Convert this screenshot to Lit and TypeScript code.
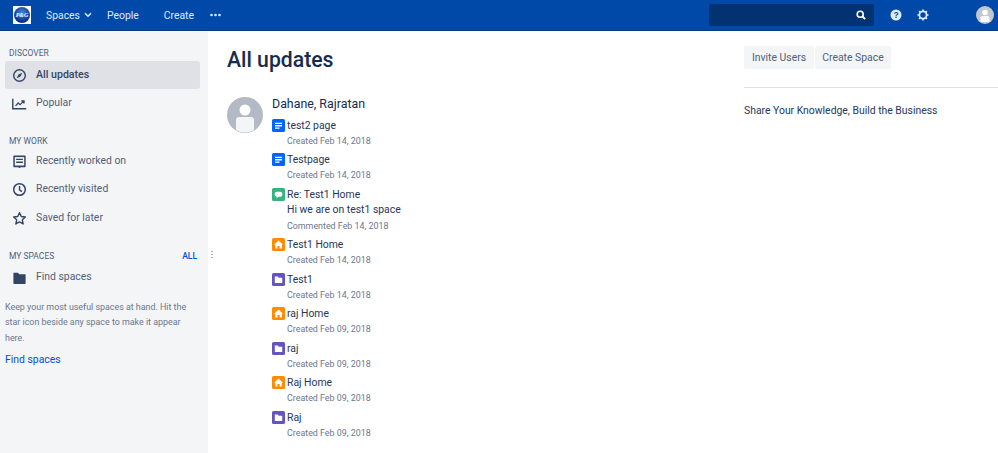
import { LitElement, html, css, svg } from "lit";
import { customElement } from "lit/decorators.js";

const typeIcon = (t: string) => {
  const colors: Record<string, string> = { page: "#0065ff", comment: "#36b37e", home: "#ff8b00", space: "#6554c0" };
  const inner: Record<string, any> = {
    page: svg`<path d="M3 3.800h7v1.300H3zM3 6.100h7v1.300H3zM3 8.400h4.500v1.300H3z" fill="#fff"/>`,
    comment: svg`<path d="M4.800 3.800h3.400a2.200 2.200 0 0 1 2.200 2.200v.6a2.200 2.200 0 0 1-2.200 2.200H6.500L4.800 10.200V8.700a2.200 2.200 0 0 1-2.200-2.100V6a2.200 2.200 0 0 1 2.200-2.200z" fill="#fff"/>`,
    home: svg`<path d="M6.500 2.600 11 6.800h-1.200V10.600H7.600V8H5.400v2.600H3.200V6.800H2z" fill="#fff"/>`,
    space: svg`<path d="M2.800 3.600h3l1 1.200h3.400v5.200H2.800z" fill="#fff"/>`,
  };
  return html`<svg class="ticon" viewBox="0 0 13 13"><rect width="13" height="13" rx="1.600" fill=${colors[t]}/>${inner[t]}</svg>`;
};

const navIcons: Record<string, any> = {
  compass: svg`<circle cx="8" cy="8" r="6.200" fill="none" stroke="#344563" stroke-width="1.500"/><path d="M11 5 9.100 9.100 5 11l1.900-4.100z" fill="#344563"/>`,
  chart: svg`<path d="M.8 3v10.600h14.400" fill="none" stroke="#344563" stroke-width="1.500"/><path d="M3.800 10.500 6.600 7.500l2 1.800 3.600-3.600M10 5.300h2.800v2.600" fill="none" stroke="#344563" stroke-width="1.400"/>`,
  doc: svg`<path d="M2.400 1.500h11.200a1 1 0 0 1 1 1v10.600a1 1 0 0 1-1 1H9.600L8 15l-1.600-.9h-4a1 1 0 0 1-1-1V2.500a1 1 0 0 1 1-1z" fill="#344563"/><rect x="3" y="3.300" width="10" height="9" fill="#f4f5f7"/><path d="M4.400 5h7.200v1.500H4.400zM4.400 8h7.200v1.500H4.400z" fill="#344563"/>`,
  clock: svg`<circle cx="8" cy="8" r="6.200" fill="none" stroke="#344563" stroke-width="1.600"/><path d="M8 4.200V8.300l2.600 2" fill="none" stroke="#344563" stroke-width="1.500"/>`,
  star: svg`<path d="M8 1.800 9.900 5.900l4.400.5-3.300 3 .9 4.400L8 11.600l-3.900 2.200.9-4.400-3.300-3 4.400-.5z" fill="none" stroke="#344563" stroke-width="1.500" stroke-linejoin="round"/>`,
  folder: svg`<path d="M1.500 2.800h4.800l1.600 1.800h6.600v9.400a.8.8 0 0 1-.8.8H2.300a.8.8 0 0 1-.8-.8z" fill="#344563"/>`,
};

type Item = { icon: string; title: string; body?: string; meta: string };
const items: Item[] = [
  { icon: "page", title: "test2 page", meta: "Created Feb 14, 2018" },
  { icon: "page", title: "Testpage", meta: "Created Feb 14, 2018" },
  { icon: "comment", title: "Re: Test1 Home", body: "Hi we are on test1 space", meta: "Commented Feb 14, 2018" },
  { icon: "home", title: "Test1 Home", meta: "Created Feb 14, 2018" },
  { icon: "space", title: "Test1", meta: "Created Feb 14, 2018" },
  { icon: "home", title: "raj Home", meta: "Created Feb 09, 2018" },
  { icon: "space", title: "raj", meta: "Created Feb 09, 2018" },
  { icon: "home", title: "Raj Home", meta: "Created Feb 09, 2018" },
  { icon: "space", title: "Raj", meta: "Created Feb 09, 2018" },
];

@customElement("app-root")
export class AppRoot extends LitElement {
  static styles = css`
    :host { display: block; width: 998px; height: 453px; overflow: hidden; background: #fff;
      font-family: Roboto, "Open Sans", sans-serif; font-size: 10.400px; color: #172b4d; }
    * { box-sizing: border-box; }
    .top { height: 31px; background: #0049a8; border-bottom: 1px solid #0a3a80; display: flex; align-items: center; color: #deebff; padding-left: 13px; }
    .logo { width: 18px; height: 18px; display: block; flex: none; }
    .tn { font-size: 10.400px; color: #deebff; }
    .spaces { margin-left: 15px; display: flex; align-items: center; gap: 4px; }
    .people { margin-left: 15px; }
    .create { margin-left: 25px; }
    .more { margin-left: 16px; width: 11px; height: 4px; display: block; }
    .search { margin-left: auto; width: 165px; height: 22px; background: #023272; border-radius: 2px; display: flex; align-items: center; justify-content: flex-end; padding-right: 8px; }
    .search svg, .ti { display: block; }
    .help { margin-left: 16px; }
    .gear { margin-left: 15px; }
    .me { margin-left: 47px; margin-right: 4px; }
    .body { display: flex; height: 422px; }
    .side { width: 208px; flex: none; background: #f4f5f7; padding: 16px 5px 0; color: #505f79; position: relative; }
    .sh { font-size: 8.500px; color: #505f79; padding-left: 4px; height: 12px; line-height: 12px; display: flex; justify-content: space-between; padding-right: 6px; }
    .sh a { color: #0052cc; font-weight: 500; }
    .row { height: 28.500px; display: flex; align-items: center; padding: 0 0 1px 7px; gap: 9px; border-radius: 3px; width: 195px; font-size: 10.400px; }
    .row svg { width: 15px; height: 15px; flex: none; margin-top: 2px; }
    .row.on { background: #dfe1e6; color: #344563; margin-top: 2px; height: 28px; padding-bottom: 2px; font-weight: 500; font-size: 10.600px; }
    .group { margin-top: 17px; }
    .group.last { margin-top: 18px; }
    .group.last .row { margin-top: 1px; }
    .hint { font-size: 8.900px; line-height: 15.500px; color: #6b778c; margin-top: 8px; padding-right: 6px; }
    .flink { color: #0052cc; margin-top: 6px; font-size: 10.400px; line-height: 15px; display: block; }
    .grip { position: absolute; right: -5px; top: 219px; width: 2px; height: 10px; background-image: radial-gradient(circle, #a5adba 0.700px, transparent 0.800px); background-size: 2px 3px; }
    .main { flex: 1; padding: 0 0 0 19px; min-width: 0; }
    .h1 { font-size: 21.200px; font-weight: 500; color: #172b4d; margin: 0; line-height: 30px; padding-top: 14px; height: 44px; }
    .feed { display: flex; gap: 9px; margin-top: 22px; }
    .avatar { width: 36px; height: 36px; flex: none; display: block; }
    .name { font-size: 12.400px; font-weight: 400; line-height: 16px; color: #172b4d; margin-bottom: 5.500px; margin-top: -1px; }
    .item { display: grid; grid-template-columns: 13px 1fr; column-gap: 2px; margin-bottom: 3.500px; }
    .ticon { width: 13px; height: 13px; display: block; margin-top: 1px; }
    .t { font-size: 10.400px; line-height: 15px; color: #253858; }
    .b { grid-column: 2; font-size: 10.400px; line-height: 16px; color: #253858; }
    .m { grid-column: 2; font-size: 8.900px; line-height: 16px; color: #6b778c; }
    .right { width: 254px; flex: none; margin-right: 0; padding-top: 15px; }
    .btns { display: flex; gap: 1px; }
    .btn { height: 23px; background: #f4f5f7; color: #505f79; border-radius: 2px; font-size: 10.400px; display: flex; align-items: center; justify-content: center; }
    .b1 { width: 70px; }
    .b2 { width: 76px; }
    hr { border: 0; border-top: 1px solid #dfe1e6; margin: 18px 0 0; }
    .tag { margin-top: 15px; font-size: 10.400px; color: #253858; line-height: 16px; }
  `;

  render() {
    return html`
      <div class="top">
        <svg class="logo" viewBox="0 0 18 18">
          <defs><radialGradient id="g" cx="50%" cy="35%" r="60%"><stop offset="0" stop-color="#3f8be0"/><stop offset="1" stop-color="#0a2a86"/></radialGradient></defs>
          <rect width="18" height="18" fill="#fff"/><circle cx="9" cy="9" r="8" fill="url(#g)"/>
          <text x="9" y="11" text-anchor="middle" font-size="6" font-style="italic" font-weight="700" fill="#fff" font-family="Liberation Serif">P&amp;G</text>
        </svg>
        <span class="tn spaces">Spaces
          <svg width="8" height="6" viewBox="0 0 8 6"><path d="M1 1.200 4 4.200 7 1.200" fill="none" stroke="#deebff" stroke-width="1.600"/></svg>
        </span>
        <span class="tn people">People</span>
        <span class="tn create">Create</span>
        <svg class="more" viewBox="0 0 11 4"><circle cx="1.500" cy="2" r="1.300" fill="#deebff"/><circle cx="5.500" cy="2" r="1.300" fill="#deebff"/><circle cx="9.500" cy="2" r="1.300" fill="#deebff"/></svg>
        <div class="search"><svg width="10" height="10" viewBox="0 0 10 10"><circle cx="4.200" cy="4.200" r="3" fill="none" stroke="#fff" stroke-width="1.600"/><path d="M6.500 6.500 9.200 9.200" stroke="#fff" stroke-width="1.800"/></svg></div>
        <svg class="ti help" width="12" height="12" viewBox="0 0 12 12"><circle cx="6" cy="6" r="5.500" fill="#deebff"/><text x="6" y="9" text-anchor="middle" font-size="8.500" font-weight="700" fill="#0049a8" font-family="Liberation Sans">?</text></svg>
        <svg class="ti gear" width="12" height="12" viewBox="0 0 12 12"><circle cx="6" cy="6" r="3.600" fill="none" stroke="#deebff" stroke-width="1.800"/><path d="M6 .5v2M6 9.500v2M.5 6h2M9.500 6h2M2.100 2.100l1.400 1.400M8.500 8.500l1.400 1.400M2.100 9.900l1.400-1.400M8.500 3.500l1.400-1.400" stroke="#deebff" stroke-width="1.700"/></svg>
        <svg class="ti me" width="18" height="18" viewBox="0 0 36 36"><circle cx="18" cy="18" r="18" fill="#c1c7d0"/><circle cx="18" cy="13" r="5.500" fill="#fff"/><rect x="9" y="20" width="18" height="12" rx="3" fill="#fff"/></svg>
      </div>
      <div class="body">
        <aside class="side">
          <div class="sh">DISCOVER</div>
          <div class="row on"><svg viewBox="0 0 16 16">${navIcons.compass}</svg>All updates</div>
          <div class="row"><svg viewBox="0 0 16 16">${navIcons.chart}</svg>Popular</div>
          <div class="group">
            <div class="sh">MY WORK</div>
            <div class="row"><svg viewBox="0 0 16 16">${navIcons.doc}</svg>Recently worked on</div>
            <div class="row"><svg viewBox="0 0 16 16">${navIcons.clock}</svg>Recently visited</div>
            <div class="row"><svg viewBox="0 0 16 16">${navIcons.star}</svg>Saved for later</div>
          </div>
          <div class="group last">
            <div class="sh"><span>MY SPACES</span><a>ALL</a></div>
            <div class="row"><svg viewBox="0 0 16 16">${navIcons.folder}</svg>Find spaces</div>
          </div>
          <div class="hint">Keep your most useful spaces at hand. Hit the star icon beside any space to make it appear here.</div>
          <a class="flink">Find spaces</a>
          <div class="grip"></div>
        </aside>
        <main class="main">
          <h1 class="h1">All updates</h1>
          <div class="feed">
            <svg class="avatar" viewBox="0 0 36 36"><circle cx="18" cy="18" r="18" fill="#b3bac5"/><circle cx="18" cy="13" r="5.500" fill="#fff"/><path d="M9 23a3 3 0 0 1 3-3h12a3 3 0 0 1 3 3v10a18 18 0 0 1-18 0z" fill="#f4f5f7"/></svg>
            <div>
              <div class="name">Dahane, Rajratan</div>
              ${items.map(
                (i) => html`<div class="item">
                  ${typeIcon(i.icon)}
                  <div class="t">${i.title}</div>
                  ${i.body ? html`<div class="b">${i.body}</div>` : ""}
                  <div class="m">${i.meta}</div>
                </div>`
              )}
            </div>
          </div>
        </main>
        <section class="right">
          <div class="btns"><div class="btn b1">Invite Users</div><div class="btn b2">Create Space</div></div>
          <hr />
          <div class="tag">Share Your Knowledge, Build the Business</div>
        </section>
      </div>
    `;
  }
}
